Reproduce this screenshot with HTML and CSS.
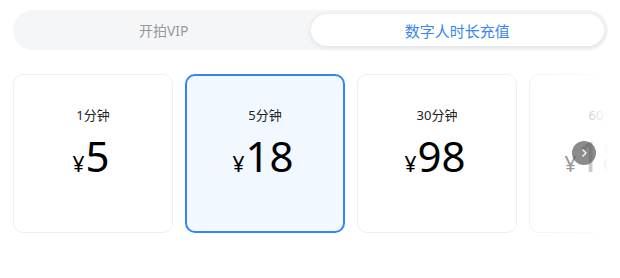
FILE: index.html
```html
<!DOCTYPE html>
<html lang="zh-CN">
<head>
    <meta charset="UTF-8">
    <title>数字人时长充值</title>
    <link rel="stylesheet" href="styles.css">
</head>
<body>
    <div class="tabs">
        <div class="tab">开拍VIP</div>
        <div class="tab active">数字人时长充值</div>
    </div>

    <div class="plan-wrap">
        <div class="plan-list">
            <div class="plan">
                <div class="plan-name">1分钟</div>
                <div class="plan-price"><span class="yen">¥</span>5</div>
            </div>
            <div class="plan selected">
                <div class="plan-name">5分钟</div>
                <div class="plan-price"><span class="yen">¥</span>18</div>
            </div>
            <div class="plan">
                <div class="plan-name">30分钟</div>
                <div class="plan-price"><span class="yen">¥</span>98</div>
            </div>
            <div class="plan">
                <div class="plan-name">60分钟</div>
                <div class="plan-price"><span class="yen">¥</span>188</div>
            </div>
        </div>
        <div class="fade"></div>
        <button class="next-btn">
            <svg width="10" height="10" viewBox="0 0 10 10"><path d="M3.5 1.5 L7 5 L3.5 8.5" fill="none" stroke="#fff" stroke-width="1.2"/></svg>
        </button>
    </div>
</body>
</html>
```

FILE: styles.css
```css
body {
    margin: 0;
    padding: 10px 12px 0 13px;
    background: #fff;
    font-family: "Noto Sans", "Noto Sans CJK SC", sans-serif;
}
.tabs {
    display: flex;
    height: 40px;
    padding: 4px;
    box-sizing: border-box;
    background-color: #f5f6f8;
    border-radius: 20px;
}
.tab {
    flex: 1;
    display: flex;
    align-items: center;
    justify-content: center;
    font-size: 14px;
    color: #999;
    border-radius: 16px;
}
.tab.active {
    background-color: #fff;
    color: #3a86f0;
    font-size: 15px;
    box-shadow: 0 1px 6px rgba(0, 0, 0, 0.1);
}
.plan-wrap {
    position: relative;
    margin-top: 24px;
    overflow: hidden;
}
.plan-list {
    display: flex;
    gap: 12px;
}
.plan {
    flex: 0 0 160px;
    height: 159px;
    box-sizing: border-box;
    border: 1px solid #eeeff1;
    border-radius: 10px;
    padding-top: 30px;
    text-align: center;
}
.plan.selected {
    border: 2px solid #3385f5;
    background-color: #f1f8ff;
    padding-top: 29px;
}
.plan-name {
    font-size: 13px;
    color: #222;
    line-height: 20px;
}
.plan-price {
    margin-top: 6px;
    margin-left: -4px;
    font-size: 42px;
    line-height: 50px;
    color: #000;
}
.yen {
    font-size: 21px;
    margin-right: 1px;
}
.fade {
    position: absolute;
    top: 0;
    bottom: 0;
    left: 514px;
    right: 0;
    background: linear-gradient(to right, rgba(255, 255, 255, 0.2) 0%, rgba(255, 255, 255, 0.5) 40%, rgba(255, 255, 255, 0.8) 80%, #fff 100%);
}
.next-btn {
    position: absolute;
    left: 559px;
    top: 67px;
    width: 24px;
    height: 24px;
    padding: 0;
    border: none;
    border-radius: 50%;
    background-color: rgba(90, 90, 90, 0.7);
    display: flex;
    align-items: center;
    justify-content: center;
}
```
